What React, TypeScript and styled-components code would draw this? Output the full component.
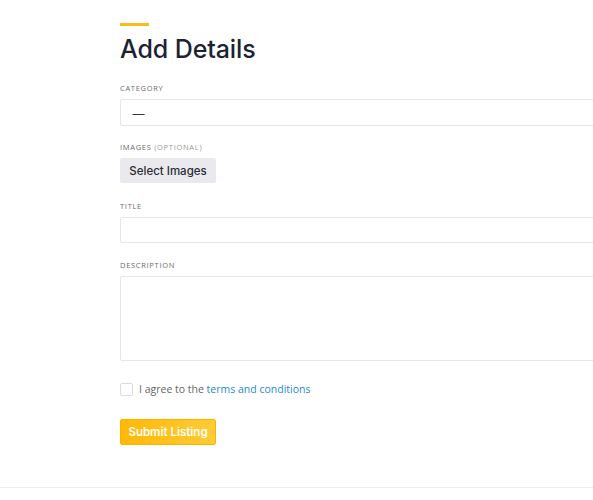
import React from "react";
import styled, { createGlobalStyle } from "styled-components";

const Global = createGlobalStyle`
  html, body { margin: 0; padding: 0; background: #fff; overflow: hidden; }
  body { font-family: "Open Sans", "Liberation Sans", sans-serif; }
`;

const Page = styled.div`
  min-height: 488px;
  border-bottom: 1px solid #ececec;
  padding: 23px 0 0 120px;
  box-sizing: border-box;
  overflow: hidden;
`;

const Form = styled.form`
  width: 540px;
  display: flex;
  flex-direction: column;
`;

const Accent = styled.div`
  width: 29px;
  height: 3px;
  background: #f7be1a;
`;

const Heading = styled.h1`
  margin: 8px 0 19px;
  font-family: Inter, "Noto Sans", sans-serif;
  font-weight: 500;
  font-size: 25px;
  line-height: 30px;
  letter-spacing: -0.1px;
  color: #1b2333;
`;

const Field = styled.div<{ $gap?: number }>`
  display: flex;
  flex-direction: column;
  align-items: flex-start;
  margin-bottom: ${(p) => p.$gap ?? 16}px;
`;

const Label = styled.label`
  font-size: 7.5px;
  line-height: 10px;
  letter-spacing: 0.7px;
  text-transform: uppercase;
  color: #6b6b6b;
  margin-bottom: 6px;
`;

const Optional = styled.span`
  color: #9a9a9a;
`;

const Control = styled.div<{ $h: number }>`
  width: 100%;
  height: ${(p) => p.$h}px;
  box-sizing: border-box;
  border: 1px solid #e6e6e6;
  border-radius: 2px;
  background: #fff;
  display: flex;
  align-items: center;
  padding: 0 11px;
  font-size: 13px;
  color: #333;
`;

const GreyButton = styled.button`
  height: 25px;
  width: 96px;
  border: none;
  border-radius: 2px;
  background: #e9e9ee;
  font-family: Inter, "Noto Sans", sans-serif;
  font-size: 11.5px;
  font-weight: 500;
  color: #2b2b33;
  padding: 0;
`;

const AgreeRow = styled.div`
  display: flex;
  align-items: center;
  gap: 6px;
  margin: 5px 0 23px;
  font-size: 10.5px;
  color: #666;
`;

const Box = styled.span`
  width: 11px;
  height: 11px;
  border: 1px solid #dcdcdc;
  border-radius: 2px;
  background: #fff;
`;

const Link = styled.a`
  color: #1f8ad2;
  text-decoration: none;
`;

const Submit = styled.button`
  align-self: flex-start;
  width: 96px;
  height: 26px;
  border: 1px solid #f5b400;
  border-radius: 2px;
  background: linear-gradient(90deg, #ffb906, #ffcb36);
  color: #fff;
  font-family: Inter, "Noto Sans", sans-serif;
  font-weight: 600;
  font-size: 11.5px;
  padding: 0;
`;

export default function App() {
  return (
    <>
      <Global />
      <Page>
        <Form onSubmit={(e) => e.preventDefault()}>
          <Accent />
          <Heading>Add Details</Heading>
          <Field>
            <Label>Category</Label>
            <Control $h={27}>—</Control>
          </Field>
          <Field $gap={18}>
            <Label>
              Images <Optional>(optional)</Optional>
            </Label>
            <GreyButton type="button">Select Images</GreyButton>
          </Field>
          <Field $gap={17}>
            <Label>Title</Label>
            <Control $h={26} />
          </Field>
          <Field $gap={16}>
            <Label>Description</Label>
            <Control $h={85} />
          </Field>
          <AgreeRow>
            <Box />
            <span>
              I agree to the <Link href="#">terms and conditions</Link>
            </span>
          </AgreeRow>
          <Submit type="submit">Submit Listing</Submit>
        </Form>
      </Page>
    </>
  );
}
